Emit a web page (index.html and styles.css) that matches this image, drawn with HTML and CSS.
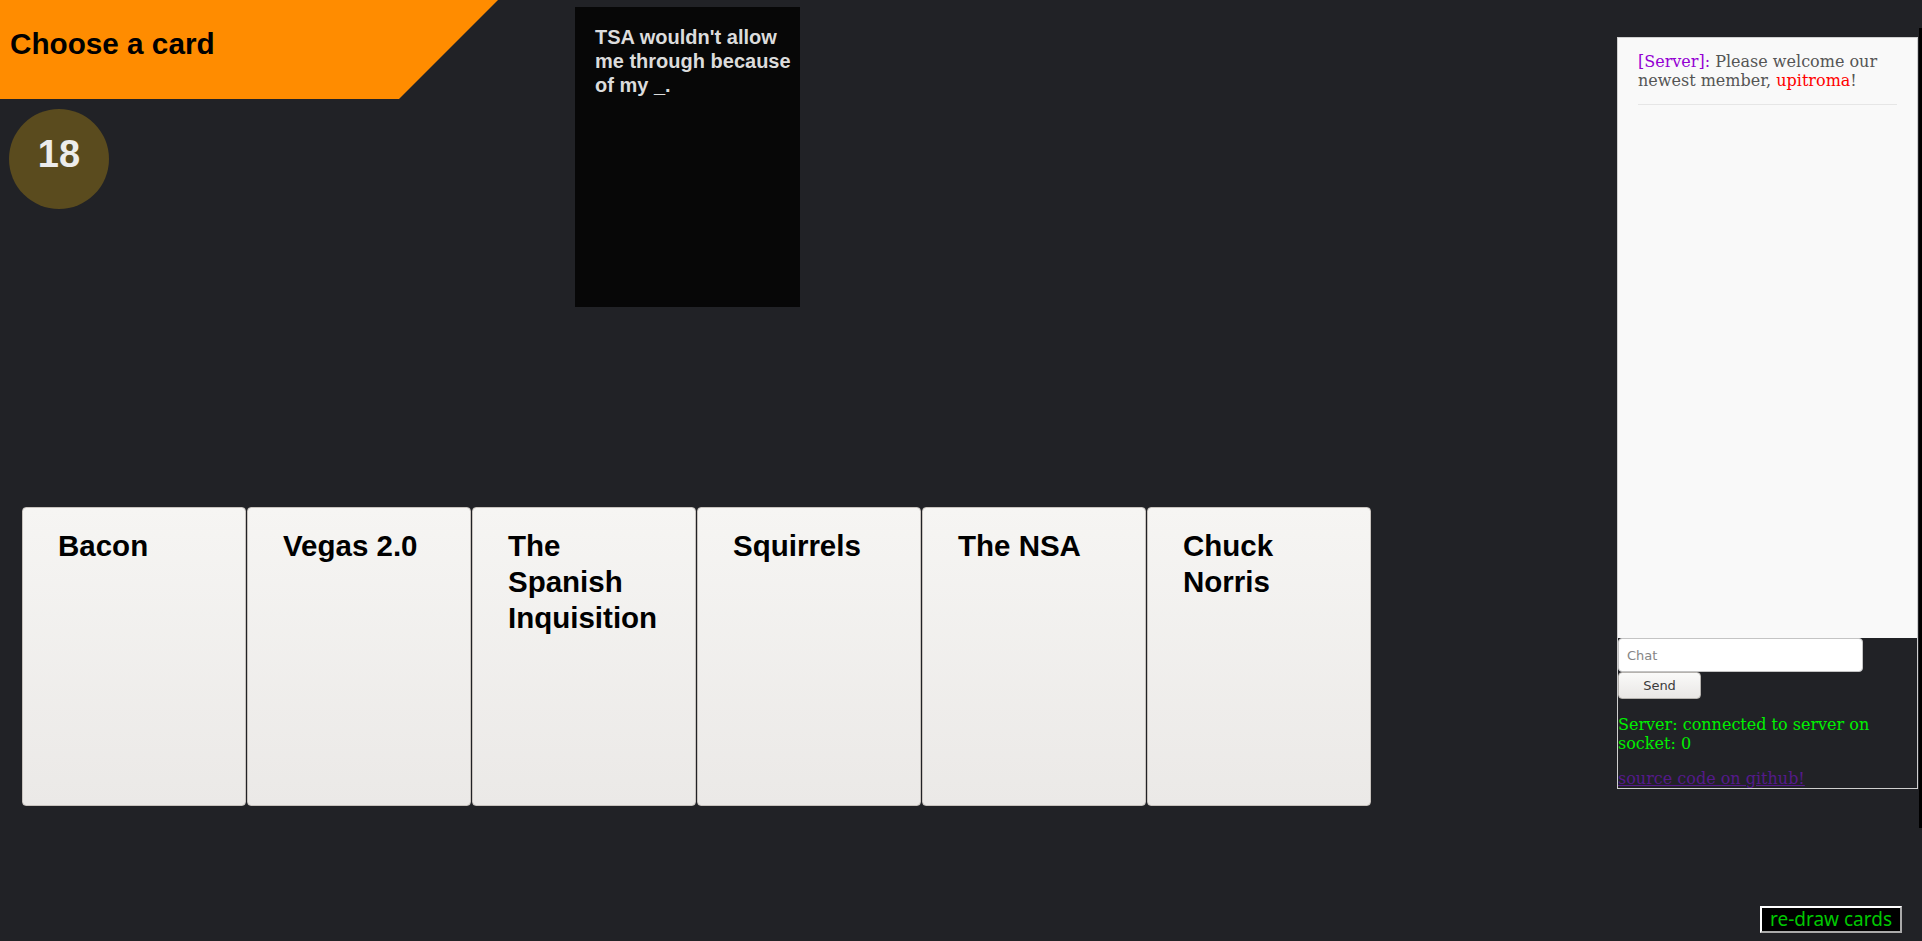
FILE: index.html
```html
<!DOCTYPE html>
<html lang="en">
<head>
<meta charset="utf-8">
<title>Cards</title>
<link rel="stylesheet" href="styles.css">
</head>
<body>
<div class="page">
  <main class="game">
    <div class="top">
      <div class="status">
        <div class="banner"><h1 class="title">Choose a card</h1></div>
        <div class="timer">18</div>
      </div>
      <div class="black-card">TSA wouldn't allow me through because of my _.</div>
    </div>
    <div class="hand">
      <div class="card">Bacon</div>
      <div class="card">Vegas 2.0</div>
      <div class="card">The Spanish Inquisition</div>
      <div class="card">Squirrels</div>
      <div class="card">The NSA</div>
      <div class="card">Chuck Norris</div>
    </div>
  </main>
  <aside class="chat">
    <div class="messages">
      <div class="message"><span class="sender">[Server]:</span> Please welcome our newest member, <span class="member">upitroma</span>!</div>
    </div>
    <input class="chat-input" type="text" placeholder="Chat">
    <button class="send">Send</button>
    <p class="server-status">Server: connected to server on socket: 0</p>
    <p class="source"><a class="source-link" href="#">source code on github!</a></p>
  </aside>
</div>
<button class="redraw">re-draw cards</button>
<div class="edge"></div>
</body>
</html>
```
FILE: styles.css
```css
html, body {
  margin: 0;
  padding: 0;
}
body {
  background: #212226;
  width: 1922px;
  height: 941px;
  overflow: hidden;
  position: relative;
  font-family: "DejaVu Serif", serif;
}
.page {
  display: flex;
  align-items: flex-start;
}
.game {
  flex: 1;
}
.top {
  display: flex;
  align-items: flex-start;
}
.status {
  width: 498px;
}
.banner {
  height: 99px;
  background: #ff8c00;
  clip-path: polygon(0 0, 100% 0, 399px 100%, 0 100%);
  box-sizing: border-box;
  padding: 27px 0 0 10px;
}
.title {
  margin: 0;
  font-family: "Liberation Sans", Arial, sans-serif;
  font-weight: bold;
  font-size: 29.7px;
  color: #000;
  line-height: normal;
}
.timer {
  margin: 10px 0 0 9px;
  width: 100px;
  height: 100px;
  border-radius: 50%;
  background: #5a4b1e;
  color: #ececec;
  font-family: "Liberation Sans", Arial, sans-serif;
  font-weight: bold;
  font-size: 38px;
  display: flex;
  align-items: center;
  justify-content: center;
  padding-bottom: 9px;
  box-sizing: border-box;
}
.black-card {
  margin: 7px 0 0 77px;
  width: 225px;
  height: 300px;
  box-sizing: border-box;
  background: #070707;
  color: #dcdcdc;
  padding: 18px 8px 0 20px;
  font-family: "Liberation Sans", Arial, sans-serif;
  font-weight: bold;
  font-size: 20px;
  line-height: 24px;
}
.hand {
  display: flex;
  gap: 1px;
  margin-top: 200px;
  padding-left: 22px;
}
.card {
  width: 224px;
  height: 299px;
  box-sizing: border-box;
  border: 1px solid #c8c3be;
  border-radius: 4px;
  background: linear-gradient(#f6f5f3, #ebe9e7);
  padding: 20px 30px 0 35px;
  font-family: "Liberation Sans", Arial, sans-serif;
  font-weight: bold;
  font-size: 29.5px;
  line-height: 36px;
  color: #000;
}
.chat {
  width: 301px;
  margin: 37px 4px 0 0;
  border: 1px solid #cfcfcf;
  box-sizing: border-box;
}
.messages {
  height: 600px;
  background: #f9f9f9;
  overflow: hidden;
}
.message {
  margin: 0 20px;
  padding: 14px 0 14px;
  border-bottom: 1px solid #e6e6e6;
  font-size: 16px;
  line-height: normal;
  color: #555;
}
.sender {
  color: #9400d3;
}
.member {
  color: #f00;
}
.chat-input {
  display: block;
  margin: 0;
  width: 245px;
  height: 34px;
  box-sizing: border-box;
  border: 1px solid #c4c4c4;
  border-radius: 4px;
  padding: 0 8px;
  background: #fff;
  font-family: "DejaVu Sans", sans-serif;
  font-size: 13px;
  color: #333;
  outline: none;
}
.chat-input::placeholder {
  color: #858585;
}
.send {
  display: block;
  margin: 0;
  width: 83px;
  height: 27px;
  box-sizing: border-box;
  border: 1px solid #b5b2ae;
  border-radius: 4px;
  background: linear-gradient(#fafaf9, #e9e7e5);
  font-family: "DejaVu Sans", sans-serif;
  font-size: 13px;
  color: #3c3c3c;
  padding: 0;
}
.server-status {
  margin: 16px 0 0;
  color: #00f000;
  font-size: 16px;
}
.source {
  margin: 16px 0 0;
  font-size: 16px;
}
.source-link {
  color: #551a8b;
}
.redraw {
  position: absolute;
  right: 20px;
  bottom: 8px;
  width: 142px;
  height: 27px;
  box-sizing: border-box;
  margin: 0;
  padding: 0;
  background: #000;
  color: #00c800;
  border: 2px solid;
  border-color: #ffffff #aaaaaa #aaaaaa #ffffff;
  font-family: "Noto Sans", sans-serif;
  font-size: 19px;
  line-height: 21px;
}
.edge {
  position: absolute;
  right: 0;
  top: 28px;
  width: 3px;
  height: 800px;
  background: #000;
}
```
